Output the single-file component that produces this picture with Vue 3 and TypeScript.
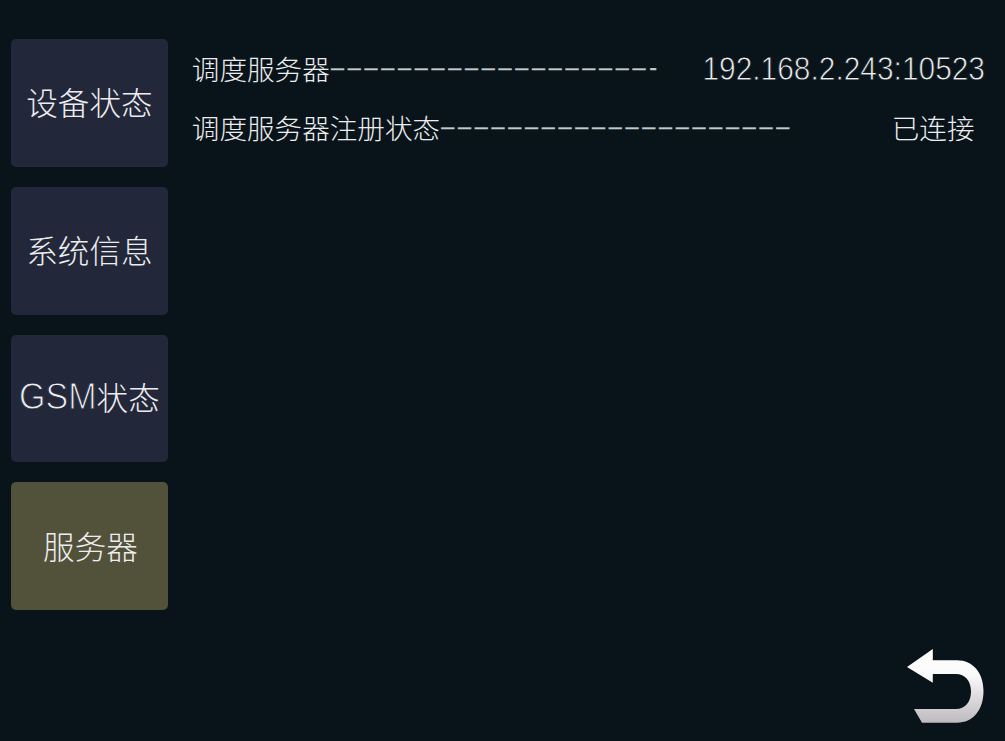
<script setup lang="ts">
import { ref } from 'vue'

interface Row {
  label: string
  leader: string
  kind: string
  value: string
}

interface Tab {
  latin: string
  text: string
}

const tabs: Tab[] = [
  { latin: '', text: '设备状态' },
  { latin: '', text: '系统信息' },
  { latin: 'GSM', text: '状态' },
  { latin: '', text: '服务器' },
]
const active = ref<number>(3)

const rows: Row[] = [
  { label: '调度服务器', leader: '–'.repeat(19) + '-', kind: 'address', value: '192.168.2.243:10523' },
  { label: '调度服务器注册状态', leader: '–'.repeat(21), kind: 'state', value: '已连接' },
]
</script>

<template>
  <div class="screen">
    <nav class="tabs">
      <button
        v-for="(tab, i) in tabs"
        :key="i"
        class="tab"
        :class="{ active: i === active }"
        @click="active = i"
      >
        <span v-if="tab.latin" class="latin">{{ tab.latin }}</span>
        <span>{{ tab.text }}</span>
      </button>
    </nav>
    <main class="content">
      <div v-for="row in rows" :key="row.label" class="row" :class="row.kind">
        <span class="label">{{ row.label }}</span>
        <span class="leader">{{ row.leader }}</span>
        <span class="value">{{ row.value }}</span>
      </div>
    </main>
    <button class="back" aria-label="返回">
      <svg width="110" height="106" viewBox="0 0 110 106">
        <defs>
          <linearGradient id="metal" x1="0" y1="14" x2="0" y2="88" gradientUnits="userSpaceOnUse">
            <stop offset="0" stop-color="#ffffff" />
            <stop offset="0.35" stop-color="#fbfafb" />
            <stop offset="0.65" stop-color="#dddbde" />
            <stop offset="1" stop-color="#bdbbbe" />
          </linearGradient>
        </defs>
        <path
          d="M12 32 L37.8 14 V25.3 H62 C78 25.3 88.5 38 88.5 56 C88.5 75 78 87.7 62 87.7 H27 L19 74 H61 C70 74 76 67 76 56.5 C76 46 70 39 61 39 H37.8 V47.8 Z"
          fill="url(#metal)"
        />
      </svg>
    </button>
  </div>
</template>

<style>
body {
  margin: 0;
  background: #09141a;
}
</style>

<style scoped>
.screen {
  position: relative;
  display: flex;
  width: 1005px;
  height: 741px;
  box-sizing: border-box;
  padding-top: 39.4px;
  background: #09141a;
  overflow: hidden;
  color: #ededef;
  font-family: "Liberation Sans", "Noto Sans CJK SC", sans-serif;
  font-weight: 300;
}
.tabs {
  display: flex;
  flex-direction: column;
  gap: 20px;
  width: 157.5px;
  margin-left: 10.7px;
}
.tab {
  display: flex;
  align-items: center;
  justify-content: center;
  height: 127.6px;
  padding: 0 0 4px;
  border: 0;
  border-radius: 5px;
  background: #22283a;
  color: inherit;
  font: inherit;
  font-family: "Noto Sans CJK SC", sans-serif;
  font-size: 31.6px;
  line-height: 40px;
  white-space: nowrap;
}
.tab.active {
  background: #52513a;
  padding: 0 0 1px 2px;
}
/* A hairline stroke in the surface colour slims the regular weight. */
.latin {
  font-family: "Liberation Sans", sans-serif;
  font-size: 34px;
  transform: scaleY(1.06);
  -webkit-text-stroke: 0.95px #22283a;
}
.content {
  flex: 1;
  margin-left: 23.6px;
  margin-right: 20px;
}
.row {
  display: flex;
  align-items: center;
  height: 59px;
  font-size: 27.6px;
  line-height: 40px;
  white-space: nowrap;
}
.label,
.state .value {
  font-family: "Noto Sans CJK SC", sans-serif;
  padding-bottom: 1px;
}
.leader {
  margin-left: 1.2px;
  padding-bottom: 4px;
  font-size: 23.4px;
  letter-spacing: 3.74px;
  color: #c4c9ca;
  -webkit-text-stroke: 0.3px #c4c9ca;
}
.value {
  margin-left: auto;
}
.address .value {
  font-size: 29.9px;
  transform: scaleY(1.08);
  -webkit-text-stroke: 0.75px #09141a;
}
.state .value {
  margin-right: 10.5px;
}
.back {
  position: absolute;
  right: 0;
  bottom: 0;
  width: 110px;
  height: 106px;
  padding: 0;
  border: 0;
  background: none;
}
.back svg {
  display: block;
}
</style>
